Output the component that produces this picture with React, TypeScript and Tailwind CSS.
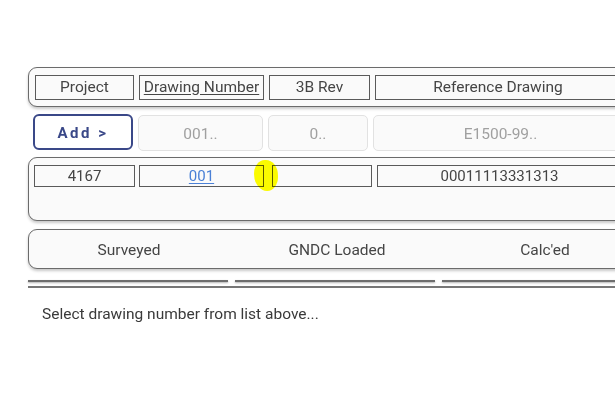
export default function App() {
  const cell = "h-[25px] border border-[#5a5a5a] bg-[#fafafa] flex items-center justify-center text-[15.5px] shrink-0";
  const dataCell = "h-[22px] border border-[#5a5a5a] bg-[#fafafa] flex items-center justify-center text-[15px] shrink-0";
  const input = "h-[36px] pt-[3px] rounded-[5px] border border-[#e2e2e2] bg-[#fafafa] flex items-center justify-center text-[15.5px] text-[#a0a0a0] shrink-0";

  return (
    <div className="w-[615px] h-[403px] overflow-hidden bg-white font-['Roboto',sans-serif]">
      <div className="pl-[28px] pt-[67px] w-[660px]">
        {/* header */}
        <div className="w-[600px] h-[40px] rounded-[9px] border border-[#6b6b6b] bg-[#fafafa] shadow-[0_2px_3px_rgba(0,0,0,0.22)] flex gap-[5px] px-[6px] pt-[7px] text-[#454545]">
          <div className={cell + " w-[99px]"}>Project</div>
          <div className={cell + " w-[125px] underline underline-offset-2"}>Drawing Number</div>
          <div className={cell + " w-[101px]"}>3B Rev</div>
          <div className={cell + " flex-1"}>Reference Drawing</div>
        </div>

        {/* input row */}
        <div className="mt-[8px] flex gap-[5px] w-[600px] pl-[5px]">
          <button className="w-[100px] h-[36px] pt-[3px] -mt-px rounded-[6px] border-2 border-[#3a4888] bg-white text-[#3a4888] text-[15px] font-bold tracking-[2.5px] shrink-0">
            Add &gt;
          </button>
          <div className={input + " w-[125px]"}>001..</div>
          <div className={input + " w-[100px]"}>0..</div>
          <div className={input + " flex-1"}>E1500-99..</div>
        </div>

        {/* data */}
        <div className="relative mt-[6px] w-[600px] h-[64px] rounded-[9px] border border-[#6b6b6b] bg-[#fafafa] shadow-[0_2px_3px_rgba(0,0,0,0.22)] flex px-[5px] pt-[7px] text-[#454545]">
          <div className={dataCell + " w-[101px]"}>4167</div>
          <div className={dataCell + " w-[125px] ml-[4px]"}>
            <span className="text-[#4a80d6] underline underline-offset-2">001</span>
          </div>
          <div className={dataCell + " w-[100px] ml-[8px]"}></div>
          <div className={dataCell + " flex-1 ml-[5px]"}>00011113331313</div>
          <div className="absolute left-[225px] top-[2px] w-[24px] h-[31px] rounded-[45%_50%_45%_55%] bg-[#ffff00] mix-blend-multiply"></div>
        </div>

        {/* status */}
        <div className="mt-[8px] w-[600px] h-[40px] pt-[3px] rounded-[9px] border border-[#6b6b6b] bg-[#fafafa] shadow-[0_2px_3px_rgba(0,0,0,0.22)] flex gap-[8px] items-center text-[15.5px] text-[#454545] overflow-hidden">
          <div className="w-[200px] shrink-0 text-center">Surveyed</div>
          <div className="w-[200px] shrink-0 text-center">GNDC Loaded</div>
          <div className="w-[200px] shrink-0 text-center">Calc'ed</div>
        </div>

        {/* tab lines */}
        <div className="mt-[11px] flex gap-[7px]">
          <div className="w-[200px] shrink-0 h-[2px] bg-[#6e6e6e] shadow-[0_1px_2px_rgba(0,0,0,0.3)]"></div>
          <div className="w-[200px] shrink-0 h-[2px] bg-[#6e6e6e] shadow-[0_1px_2px_rgba(0,0,0,0.3)]"></div>
          <div className="w-[200px] shrink-0 h-[2px] bg-[#6e6e6e] shadow-[0_1px_2px_rgba(0,0,0,0.3)]"></div>
        </div>
        <div className="mt-[4px] h-[2px] w-[620px] bg-[#777]"></div>

        <p className="mt-[15px] pl-[14px] text-[15.5px] text-[#3a3a3a]">Select drawing number from list above...</p>
      </div>
    </div>
  );
}
